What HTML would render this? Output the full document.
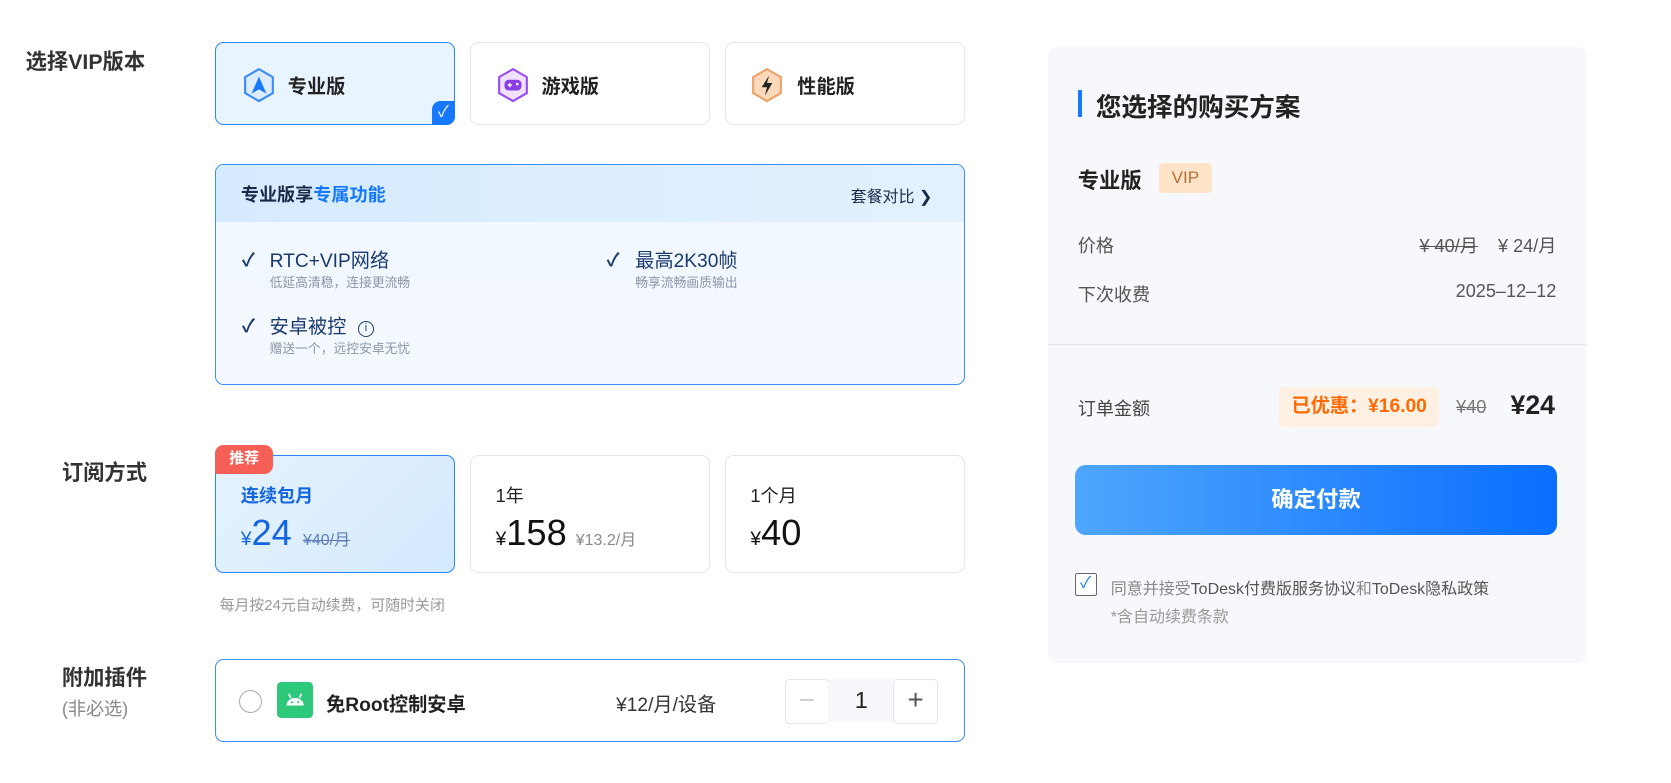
<!DOCTYPE html>
<html><head><meta charset="utf-8">
<style>
html,body{margin:0;padding:0;background:#fff;width:1671px;height:783px;overflow:hidden}
#w{zoom:1.066;width:1568px;height:735px;position:relative;font-family:"Liberation Sans","Noto Sans CJK SC",sans-serif;color:#222}
.a{position:absolute;white-space:nowrap}
.card{position:absolute;border:1px solid #e3e6eb;border-radius:8px;background:#fff;box-sizing:border-box}
.sel{border:1px solid #2b87f5;background:#e8f4ff}
.b{font-weight:bold}
.s{text-decoration:line-through}
</style></head><body><div id="w">
<div class="a b" style="left:24px;top:42px;font-size:20px;color:#333">选择VIP版本</div>
<div class="a b" style="left:58px;top:428px;font-size:20px;color:#333">订阅方式</div>
<div class="a b" style="left:58px;top:620px;font-size:20px;color:#333">附加插件</div>
<div class="a" style="left:58px;top:652px;font-size:17px;color:#888">(非必选)</div>

<div class="card sel" style="left:202px;top:39px;width:225px;height:78px">
<svg class="a" style="left:25px;top:23px" width="30" height="34" viewBox="0 0 30 34"><path d="M15 2L28 9.5V24.5L15 32L2 24.5V9.5Z" fill="#dcecff" stroke="#3b8cf5" stroke-width="2"/><path d="M15 9L22 25L15 21L8 25Z" fill="#1677ff"/></svg>
<div class="a b" style="left:67px;top:27px;font-size:18px">专业版</div>
<div class="a" style="right:-1px;bottom:-1px;width:22px;height:22px;background:#1677ff;border-radius:8px 0 8px 0;color:#fff;font-size:15px;text-align:center;line-height:22px">✓</div>
</div>
<div class="card" style="left:441px;top:39px;width:225px;height:78px">
<svg class="a" style="left:24px;top:23px" width="30" height="34" viewBox="0 0 30 34"><path d="M15 2L28 9.5V24.5L15 32L2 24.5V9.5Z" fill="#efe1ff" stroke="#9b4df0" stroke-width="2"/><rect x="7" y="12" width="16" height="10" rx="4" fill="#8a3fe6"/><circle cx="19" cy="16" r="1.2" fill="#fff"/><path d="M10 17h4M12 15v4" stroke="#fff" stroke-width="1.3"/></svg>
<div class="a b" style="left:66px;top:27px;font-size:18px">游戏版</div>
</div>
<div class="card" style="left:680px;top:39px;width:225px;height:78px">
<svg class="a" style="left:24px;top:23px" width="30" height="34" viewBox="0 0 30 34"><path d="M15 2L28 9.5V24.5L15 32L2 24.5V9.5Z" fill="#fcd9bb" stroke="#eba26b" stroke-width="2"/><path d="M17 8L10 19H15L13 27L20 15H15Z" fill="#222"/></svg>
<div class="a b" style="left:67px;top:27px;font-size:18px">性能版</div>
</div>

<div class="card" style="left:202px;top:154px;width:703px;height:207px;border-color:#3b8ef5;background:linear-gradient(#f0f7ff,#f5f9ff);overflow:hidden">
<div class="a" style="left:0;top:0;width:703px;height:53px;background:linear-gradient(90deg,#d6ebff,#e3f1ff)"></div>
<div class="a b" style="left:23px;top:15px;font-size:17px;color:#1a2b4a">专业版享<span style="color:#1677ff">专属功能</span></div>
<div class="a" style="left:595px;top:17px;font-size:15px;color:#1a2b4a">套餐对比 ❯</div>
<div class="a b" style="left:24px;top:76px;font-size:17px;color:#1a3a6e">✓</div>
<div class="a" style="left:50px;top:75px;font-size:18px;color:#1a3a6e">RTC+VIP网络</div>
<div class="a" style="left:50px;top:100px;font-size:12px;color:#8a97a8">低延高清稳，连接更流畅</div>
<div class="a b" style="left:366px;top:76px;font-size:17px;color:#1a3a6e">✓</div>
<div class="a" style="left:393px;top:75px;font-size:18px;color:#1a3a6e">最高2K30帧</div>
<div class="a" style="left:393px;top:100px;font-size:12px;color:#8a97a8">畅享流畅画质输出</div>
<div class="a b" style="left:24px;top:138px;font-size:17px;color:#1a3a6e">✓</div>
<div class="a" style="left:50px;top:137px;font-size:18px;color:#1a3a6e">安卓被控 <span style="display:inline-block;width:13px;height:13px;border:1.3px solid #1a3a6e;border-radius:50%;font-size:10px;text-align:center;line-height:13px;vertical-align:2px;margin-left:6px">i</span></div>
<div class="a" style="left:50px;top:162px;font-size:12px;color:#8a97a8">赠送一个，远控安卓无忧</div>
</div>

<div class="card sel" style="left:202px;top:427px;width:225px;height:111px;background:linear-gradient(135deg,#e6f3ff,#d3e9fd)">
<div class="a b" style="left:23px;top:24px;font-size:17px;color:#1466e0">连续包月</div>
<div class="a" style="left:23px;top:52px;color:#1466e0"><span style="font-size:18px">¥</span><span style="font-size:34px">24</span> <span class="s" style="font-size:15px;color:#5a7fb8;margin-left:6px">¥40/月</span></div>
</div>
<div class="a b" style="left:202px;top:417px;width:54px;height:28px;background:#f55f55;border-radius:8px 8px 8px 2px;color:#fff;font-size:14px;text-align:center;line-height:27px">推荐</div>
<div class="card" style="left:441px;top:427px;width:225px;height:111px">
<div class="a" style="left:23px;top:24px;font-size:17px">1年</div>
<div class="a" style="left:23px;top:52px;color:#111"><span style="font-size:18px">¥</span><span style="font-size:34px">158</span> <span style="font-size:15px;color:#888;margin-left:4px">¥13.2/月</span></div>
</div>
<div class="card" style="left:680px;top:427px;width:225px;height:111px">
<div class="a" style="left:23px;top:24px;font-size:17px">1个月</div>
<div class="a" style="left:23px;top:52px;color:#111"><span style="font-size:18px">¥</span><span style="font-size:34px">40</span></div>
</div>
<div class="a" style="left:206px;top:557px;font-size:14px;color:#999">每月按24元自动续费，可随时关闭</div>

<div class="card" style="left:202px;top:618px;width:703px;height:78px;border-color:#3b8ef5">
<div class="a" style="left:21px;top:28px;width:20px;height:20px;border:1px solid #aaa;border-radius:50%"></div>
<div class="a" style="left:57px;top:21px;width:34px;height:34px;background:#2ec87a;border-radius:4px">
<svg width="34" height="34" viewBox="0 0 34 34"><path d="M9 22a8 7 0 0 1 16 0Z" fill="#fff"/><path d="M11 11l2 4M23 11l-2 4" stroke="#fff" stroke-width="1.5"/><circle cx="14" cy="19" r="1" fill="#2ec87a"/><circle cx="20" cy="19" r="1" fill="#2ec87a"/></svg></div>
<div class="a b" style="left:103px;top:27px;font-size:18px">免Root控制安卓</div>
<div class="a" style="left:375px;top:27px;font-size:18px;color:#333">¥12/月/设备</div>
<div class="a" style="left:533px;top:18px;width:40px;height:40px;border:1px solid #e3e6eb;border-radius:4px;text-align:center;line-height:38px;font-size:26px;color:#ccc">−</div>
<div class="a" style="left:574px;top:18px;width:62px;height:40px;background:#f6f8fb;text-align:center;line-height:40px;font-size:22px">1</div>
<div class="a" style="left:635px;top:18px;width:40px;height:40px;border:1px solid #e3e6eb;border-radius:4px;text-align:center;line-height:38px;font-size:26px;color:#555">+</div>
</div>

<div class="a" style="left:983px;top:44px;width:505px;height:578px;background:#f6f8fb;border-radius:8px">
<div class="a" style="left:28px;top:40px;width:4px;height:26px;background:#1677ff"></div>
<div class="a b" style="left:45px;top:38px;font-size:24px;color:#222">您选择的购买方案</div>
<div class="a b" style="left:28px;top:110px;font-size:20px">专业版</div>
<div class="a" style="left:104px;top:109px;width:50px;height:28px;background:#fde4c8;border-radius:4px;color:#b5703a;font-size:16px;text-align:center;line-height:28px">VIP</div>
<div class="a" style="left:28px;top:174px;font-size:17px;color:#555">价格</div>
<div class="a" style="right:28px;top:174px;font-size:17px;color:#555"><span class="s">¥ 40/月</span>&nbsp;&nbsp;&nbsp;&nbsp;¥ 24/月</div>
<div class="a" style="left:28px;top:220px;font-size:17px;color:#555">下次收费</div>
<div class="a" style="right:28px;top:220px;font-size:17px;color:#555">2025–12–12</div>
<div class="a" style="left:0;top:279px;width:505px;height:1px;background:#e0e3e8"></div>
<div class="a" style="left:28px;top:327px;font-size:17px;color:#444">订单金额</div>
<div class="a b" style="left:217px;top:319px;width:150px;height:38px;background:#fff0e4;border-radius:4px;color:#ff6a00;font-size:18px;text-align:center;line-height:38px">已优惠：¥16.00</div>
<div class="a s" style="left:383px;top:328px;font-size:17px;color:#777">¥40</div>
<div class="a b" style="left:434px;top:322px;font-size:25px;color:#222">¥24</div>
<div class="a b" style="left:25px;top:392px;width:453px;height:66px;border-radius:10px;background:linear-gradient(90deg,#4fa6fc,#0a6eff);color:#fff;font-size:21px;text-align:center;line-height:66px">确定付款</div>
<div class="a" style="left:25px;top:494px;width:19px;height:19px;border:1.3px solid #666;border-radius:2px;background:#fff;color:#1677ff;font-size:15px;text-align:center;line-height:19px">✓</div>
<div class="a" style="left:59px;top:495px;font-size:15px;color:#888">同意并接受<span style="color:#555">ToDesk付费版服务协议</span>和<span style="color:#555">ToDesk隐私政策</span></div>
<div class="a" style="left:59px;top:522px;font-size:15px;color:#999">*含自动续费条款</div>
</div>
</div></body></html>
